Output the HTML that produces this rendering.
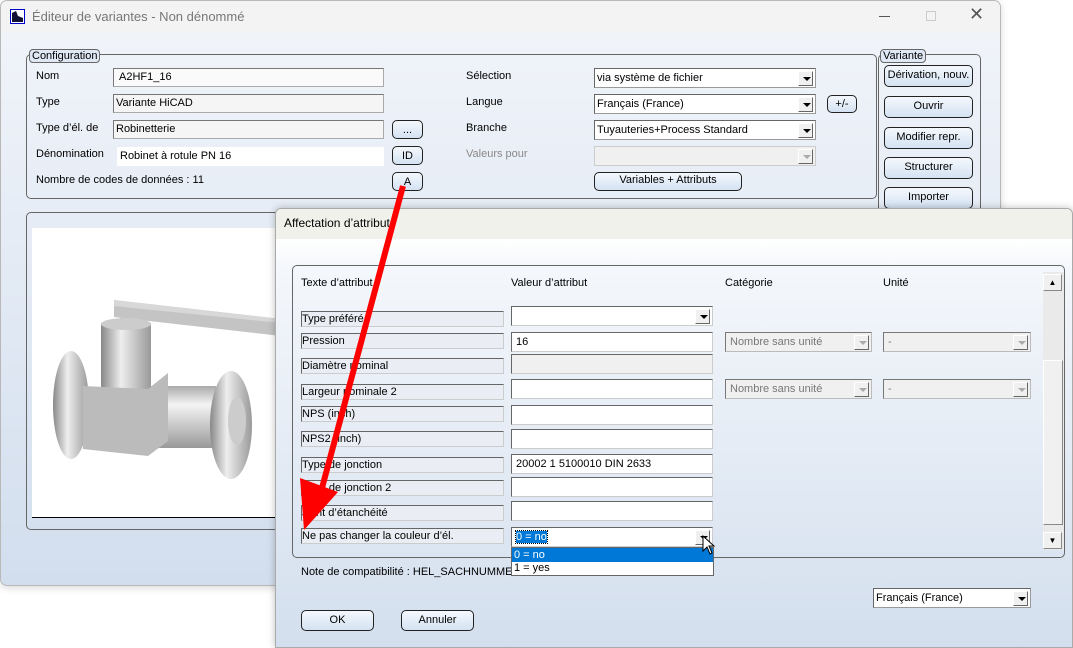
<!DOCTYPE html>
<html><head><meta charset="utf-8"><style>
*{box-sizing:border-box;margin:0;padding:0}
body{width:1073px;height:646px;position:relative;overflow:hidden;background:#fff;font-family:"Liberation Sans",sans-serif;font-size:11px;color:#000}
.a{position:absolute}
.win{left:0;top:0;width:1001px;height:586px;border:1px solid #b8b8b8;border-radius:7px;background:linear-gradient(#f2f5fa,#d2deee);overflow:hidden;box-shadow:0 2px 8px rgba(0,0,0,.15)}
.tb{left:0;top:0;width:1001px;height:32px;background:#f3f3f3}
.grp{border:1px solid #666;border-radius:5px}
.leg{background:#dfe8f4;border:1px solid #666;border-radius:4px;padding:0 2px;font-size:11px;line-height:12px}
.fld{background:#f5f5f5;border:1px solid #aaa;border-top-color:#777;border-left-color:#777;padding-left:2px;line-height:17px}
.btn{border:1px solid #222;border-radius:5px;background:linear-gradient(#f4f8fd,#d4e2f2);text-align:center;line-height:19px}
.cb{background:#fff;border:1px solid #999;border-top-color:#666;border-left-color:#666;padding-left:2px;line-height:18px}
.dd{position:absolute;right:2px;top:2px;width:15px;height:15px;background:#f0f0f0;border:1px solid #fff;border-right-color:#666;border-bottom-color:#666}
.dd:after{content:"";position:absolute;left:4px;top:5px;border:4px solid transparent;border-top:4px solid #000;border-bottom:0}
.dis .dd:after{border-top-color:#aaa}
.lbl{background:#eaeef4;border:1px solid #ccc;border-top-color:#666;border-left-color:#666;line-height:15px;height:16px;width:203px;left:301px}
.vf{background:#fff;border:1px solid #ccc;border-top-color:#666;border-left-color:#666;width:202px;left:511px;height:20px;padding-left:4px;line-height:19px}
.gcb{background:#f0f0f0;border:1px solid #bbb;border-top-color:#777;border-left-color:#777;color:#777;padding-left:4px;line-height:18px;height:20px}
.gcb .dd:after{border-top-color:#aaa}
</style></head><body>
<div class="a win">
 <div class="a tb"></div>
 <div class="a" style="left:9px;top:8px;width:15px;height:15px;border:1px solid #00c;background:#fff"><svg width="13" height="13"><polygon points="1,12 1,3 5,1 7,6 12,8 12,12" fill="#113"/></svg></div>
 <div class="a" style="left:31px;top:8px;font-size:13px;color:#777">Éditeur de variantes - Non dénommé</div>
 <div class="a" style="left:878px;top:15px;width:11px;height:1px;background:#555"></div>
 <div class="a" style="left:925px;top:10px;width:10px;height:10px;border:1px solid #ccc"></div>
 <div class="a" style="left:968px;top:3px;font-size:18px;color:#555">✕</div>

 <div class="a grp" style="left:25px;top:53px;width:851px;height:145px"></div>
 <div class="a leg" style="left:28px;top:48px">Configuration</div>
 <div class="a" style="left:35px;top:69px">Nom</div>
 <div class="a" style="left:35px;top:95px">Type</div>
 <div class="a" style="left:35px;top:121px">Type d’él. de</div>
 <div class="a" style="left:35px;top:147px">Dénomination</div>
 <div class="a" style="left:35px;top:173px">Nombre de codes de données : 11</div>
 <div class="a fld" style="left:112px;top:67px;width:271px;height:19px;background:#fafafa;padding-left:5px">A2HF1_16</div>
 <div class="a fld" style="left:112px;top:93px;width:271px;height:19px">Variante HiCAD</div>
 <div class="a fld" style="left:112px;top:119px;width:271px;height:19px">Robinetterie</div>
 <div class="a" style="left:116px;top:146px;width:267px;height:19px;background:#fff;padding-left:3px;line-height:18px">Robinet à rotule PN 16</div>
 <div class="a btn" style="left:391px;top:119px;width:31px;height:19px">...</div>
 <div class="a btn" style="left:391px;top:145px;width:31px;height:19px">ID</div>
 <div class="a btn" style="left:391px;top:171px;width:31px;height:19px">A</div>
 <div class="a" style="left:465px;top:69px">Sélection</div>
 <div class="a" style="left:465px;top:95px">Langue</div>
 <div class="a" style="left:465px;top:121px">Branche</div>
 <div class="a" style="left:465px;top:147px;color:#888">Valeurs pour</div>
 <div class="a cb" style="left:593px;top:67px;width:222px;height:20px">via système de fichier<div class="dd"></div></div>
 <div class="a cb" style="left:593px;top:93px;width:222px;height:20px">Français (France)<div class="dd"></div></div>
 <div class="a cb" style="left:593px;top:119px;width:222px;height:20px">Tuyauteries+Process Standard<div class="dd"></div></div>
 <div class="a cb dis" style="left:593px;top:145px;width:222px;height:20px;background:#f0f0f0;border-color:#ccc"><div class="dd"></div></div>
 <div class="a btn" style="left:826px;top:94px;width:30px;height:18px;line-height:16px">+/-</div>
 <div class="a btn" style="left:593px;top:171px;width:148px;height:19px;line-height:15px">Variables + Attributs</div>

 <div class="a grp" style="left:877px;top:53px;width:103px;height:170px"></div>
 <div class="a leg" style="left:879px;top:48px">Variante</div>
 <div class="a btn" style="left:883px;top:64px;width:89px;height:22px">Dérivation, nouv.</div>
 <div class="a btn" style="left:883px;top:95px;width:89px;height:22px">Ouvrir</div>
 <div class="a btn" style="left:883px;top:126px;width:89px;height:22px">Modifier repr.</div>
 <div class="a btn" style="left:883px;top:156px;width:89px;height:22px">Structurer</div>
 <div class="a btn" style="left:883px;top:186px;width:89px;height:22px">Importer</div>

 <div class="a grp" style="left:25px;top:211px;width:260px;height:318px"></div>
 <div class="a" style="left:31px;top:227px;width:250px;height:290px;background:#fff;border-bottom:1px solid #000">
  <svg width="250" height="290" viewBox="31 227 250 290">
   <defs><linearGradient id="g" x1="0" x2="1"><stop offset="0" stop-color="#888"/><stop offset=".4" stop-color="#eee"/><stop offset="1" stop-color="#999"/></linearGradient>
   <linearGradient id="gv" x1="0" y1="0" x2="0" y2="1"><stop offset="0" stop-color="#aaa"/><stop offset=".3" stop-color="#f4f4f4"/><stop offset="1" stop-color="#999"/></linearGradient></defs>
   <polygon points="113,299 280,318 280,335 113,316" fill="#c4c4c4"/><polygon points="113,299 280,318 280,322 113,305" fill="#d8d8d8"/>
   <rect x="119" y="317" width="10" height="12" fill="url(#g)"/>
   <ellipse cx="70" cy="404" rx="18" ry="54" fill="url(#g)"/>
   <rect x="145" y="385" width="70" height="62" fill="url(#gv)"/>
   <ellipse cx="230" cy="424" rx="21" ry="54" fill="url(#g)"/><ellipse cx="236" cy="420" rx="9" ry="24" fill="#ccc"/>
   <rect x="100" y="322" width="50" height="66" fill="url(#g)"/><ellipse cx="125" cy="323" rx="25" ry="6" fill="#ccc"/>
   <polygon points="82,385 147,388 167,372 167,440 147,455 82,448" fill="#bbb"/>
  </svg>
 </div>
</div>

<div class="a" style="left:275px;top:208px;width:798px;height:440px;border:1px solid #aaa;border-radius:6px 6px 0 0;background:linear-gradient(#fff 30px,#f4f7fb 60px,#d3dfee);box-shadow:0 0 8px rgba(0,0,0,.25)">
 <div style="height:30px;background:#f1f1ec;border-radius:6px 6px 0 0"></div>
</div>
<div class="a" style="left:284px;top:216px;font-size:12px">Affectation d’attribut</div>
<div class="a grp" style="left:292px;top:265px;width:773px;height:293px"></div>
<div class="a" style="left:301px;top:277px">Texte d’attribut</div>
<div class="a" style="left:511px;top:277px">Valeur d’attribut</div>
<div class="a" style="left:725px;top:277px">Catégorie</div>
<div class="a" style="left:883px;top:277px">Unité</div>
<div class="a" style="left:1043px;top:272px;width:21px;height:278px;background:#eaeaea"></div>
<div class="a" style="left:1043px;top:360px;width:20px;height:165px;background:#f0f0f0;border:1px solid #888;border-top-color:#fff;border-left-color:#fff"></div>
<div class="a" style="left:1043px;top:274px;width:19px;height:17px;background:#f0f0f0;border:1px solid #888;border-top-color:#fff;border-left-color:#fff;font-size:8px;text-align:center;line-height:15px">▲</div>
<div class="a" style="left:1043px;top:532px;width:19px;height:17px;background:#f0f0f0;border:1px solid #888;border-top-color:#fff;border-left-color:#fff;font-size:8px;text-align:center;line-height:15px">▼</div>

<div class="a lbl" style="top:311px">Type préféré</div>
<div class="a lbl" style="top:333px">Pression</div>
<div class="a lbl" style="top:358px">Diamètre nominal</div>
<div class="a lbl" style="top:384px">Largeur nominale 2</div>
<div class="a lbl" style="top:406px">NPS (inch)</div>
<div class="a lbl" style="top:431px">NPS2 (inch)</div>
<div class="a lbl" style="top:457px">Type de jonction</div>
<div class="a lbl" style="top:480px">Type de jonction 2</div>
<div class="a lbl" style="top:505px">Joint d’étanchéité</div>
<div class="a lbl" style="top:528px">Ne pas changer la couleur d’él.</div>

<div class="a" style="left:301px;top:566px">Note de compatibilité : HEL_SACHNUMMER s</div>

<div class="a vf" style="top:306px"><div class="dd"></div></div>
<div class="a vf" style="top:332px">16</div>
<div class="a vf" style="top:354px;background:#f0f0f0"></div>
<div class="a vf" style="top:379px"></div>
<div class="a vf" style="top:405px"></div>
<div class="a vf" style="top:429px"></div>
<div class="a vf" style="top:454px">20002 1 5100010 DIN 2633</div>
<div class="a vf" style="top:477px"></div>
<div class="a vf" style="top:501px"></div>
<div class="a vf" style="top:527px"><span style="background:#0078d7;color:#fff;outline:1px dotted #000">0 = no</span><div class="dd"></div></div>
<div class="a" style="left:511px;top:547px;width:203px;height:29px;background:#fff;border:1px solid #666">
 <div style="background:#0078d7;color:#fff;line-height:14px;padding-left:2px">0 = no</div>
 <div style="line-height:13px;padding-left:2px">1 = yes</div>
</div>
<svg class="a" style="left:702px;top:535px" width="16" height="22"><path d="M1 1 L1 16 L5 12 L8 19 L10 18 L7 11 L12 11 Z" fill="#fff" stroke="#000"/></svg>

<div class="a gcb" style="left:725px;top:332px;width:147px">Nombre sans unité<div class="dd"></div></div>
<div class="a gcb" style="left:883px;top:332px;width:148px">-<div class="dd"></div></div>
<div class="a gcb" style="left:725px;top:379px;width:147px">Nombre sans unité<div class="dd"></div></div>
<div class="a gcb" style="left:883px;top:379px;width:148px">-<div class="dd"></div></div>

<div class="a cb" style="left:873px;top:588px;width:158px;height:20px">Français (France)<div class="dd"></div></div>
<div class="a btn" style="left:301px;top:610px;width:73px;height:21px">OK</div>
<div class="a btn" style="left:401px;top:610px;width:73px;height:21px">Annuler</div>

<svg class="a" style="left:0;top:0" width="1073" height="646">
 <line x1="403" y1="186" x2="322" y2="488" stroke="#f00" stroke-width="6"/>
 <polygon points="304,530 300,478 338,492" fill="#f00"/>
</svg>
</body></html>
